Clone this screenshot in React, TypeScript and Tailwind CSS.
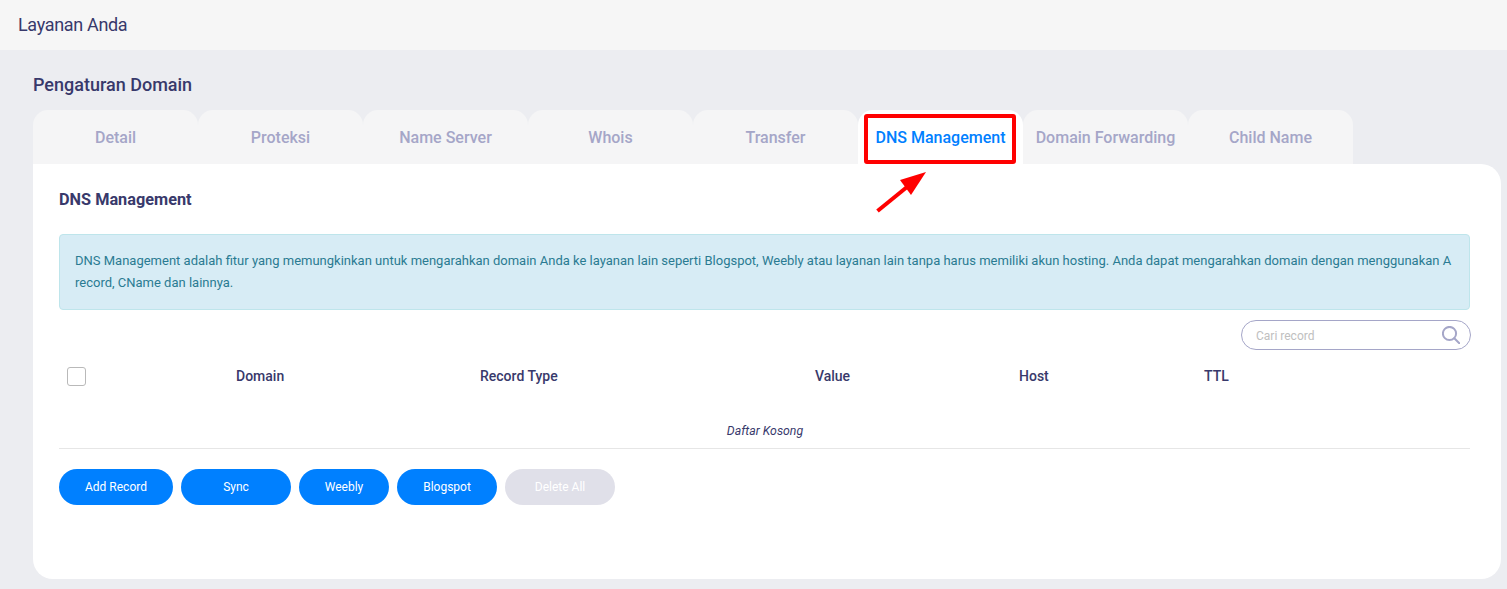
const tabs = ["Detail", "Proteksi", "Name Server", "Whois", "Transfer", "DNS Management", "Domain Forwarding", "Child Name"];

export default function App() {
  return (
    <div className="relative h-[589px] overflow-hidden bg-[#ecedf1] font-['Roboto',sans-serif] text-[#38396b]">
      <div className="flex h-[50px] items-center bg-[#f6f6f6] pb-[1px] pl-[18px] text-[18px] tracking-[-0.33px]">Layanan Anda</div>

      <div className="pl-[33px] pr-[6px]">
        <h1 className="flex h-[60px] items-center pt-[8px] text-[18px] font-medium">Pengaturan Domain</h1>

        <div className="flex">
          {tabs.map((tab) => (
            <div
              key={tab}
              className={
                tab === "DNS Management"
                  ? "flex h-[54px] w-[165px] items-center justify-center rounded-t-[15px] bg-white pt-[2px] text-[16px] font-medium text-[#0080ff]"
                  : "flex h-[54px] w-[165px] items-center justify-center rounded-t-[15px] bg-[#f5f5f6] pt-[2px] text-[16px] font-medium text-[#a5a6c8]"
              }
            >
              {tab}
            </div>
          ))}
        </div>

        <div className="h-[415px] rounded-b-[20px] rounded-tr-[20px] bg-white px-[26px] pr-[31px]">
          <h2 className="flex h-[70px] items-center pt-[2px] text-[16.3px] font-bold">DNS Management</h2>

          <div className="h-[76px] rounded-[4px] border border-[#bee5eb] bg-[#d7ecf5] px-[15px] pt-[15px] text-[13px] leading-[22px] text-[#2a7b92]">
            DNS Management adalah fitur yang memungkinkan untuk mengarahkan domain Anda ke layanan lain seperti Blogspot, Weebly atau layanan lain tanpa harus memiliki akun hosting. Anda dapat mengarahkan domain dengan menggunakan A record, CName dan lainnya.
          </div>

          <div className="-mr-[1px] mt-[10px] flex justify-end">
            <div className="flex h-[30px] w-[230px] items-center justify-between rounded-full border border-[#a5a6c8] pl-[14px] pr-[10px] text-[12px] text-[#c0c0c0]">
              <span className="pt-[1px]">Cari record</span>
              <svg width="18" height="18" viewBox="0 0 18 18" fill="none" stroke="#a5a6c8" strokeWidth="2">
                <circle cx="7.5" cy="7.5" r="6.6" />
                <path d="M12.3 12.3L17.4 17.4" strokeLinecap="round" />
              </svg>
            </div>
          </div>

          <div className="grid h-[52px] grid-cols-[177px_244px_335px_204px_185px_1fr] items-center text-[14px] font-medium">
            <div className="pl-[8px]">
              <div className="h-[19px] w-[19px] rounded-[3px] border border-[#b9b9b9] bg-white" />
            </div>
            <div>Domain</div>
            <div>Record Type</div>
            <div>Value</div>
            <div>Host</div>
            <div>TTL</div>
          </div>

          <div className="flex h-[47px] items-center justify-center border-b border-[#e6e6e6] pl-[1px] pt-[12px] text-[12.3px] italic">
            Daftar Kosong
          </div>

          <div className="mt-[20px] flex gap-[8px] text-[12px] text-white">
            <div className="flex h-[36px] w-[114px] items-center justify-center rounded-full bg-[#0080ff]">Add Record</div>
            <div className="flex h-[36px] w-[110px] items-center justify-center rounded-full bg-[#0080ff]">Sync</div>
            <div className="flex h-[36px] w-[90px] items-center justify-center rounded-full bg-[#0080ff]">Weebly</div>
            <div className="flex h-[36px] w-[100px] items-center justify-center rounded-full bg-[#0080ff]">Blogspot</div>
            <div className="flex h-[36px] w-[110px] items-center justify-center rounded-full bg-[#e0e0e9]">Delete All</div>
          </div>
        </div>
      </div>

      {/* red annotation over the active tab */}
      <div className="absolute left-[864px] top-[114px] h-[50px] w-[152px] rounded-[3px] border-[4px] border-[#ff0000]" />
      <svg className="absolute left-[870px] top-[168px]" width="60" height="50" viewBox="0 0 60 50" fill="#ff0000">
        <path d="M7.5 43L37 19" stroke="#ff0000" strokeWidth="4" />
        <path d="M56 4L30 12L41 27Z" />
      </svg>
    </div>
  );
}
